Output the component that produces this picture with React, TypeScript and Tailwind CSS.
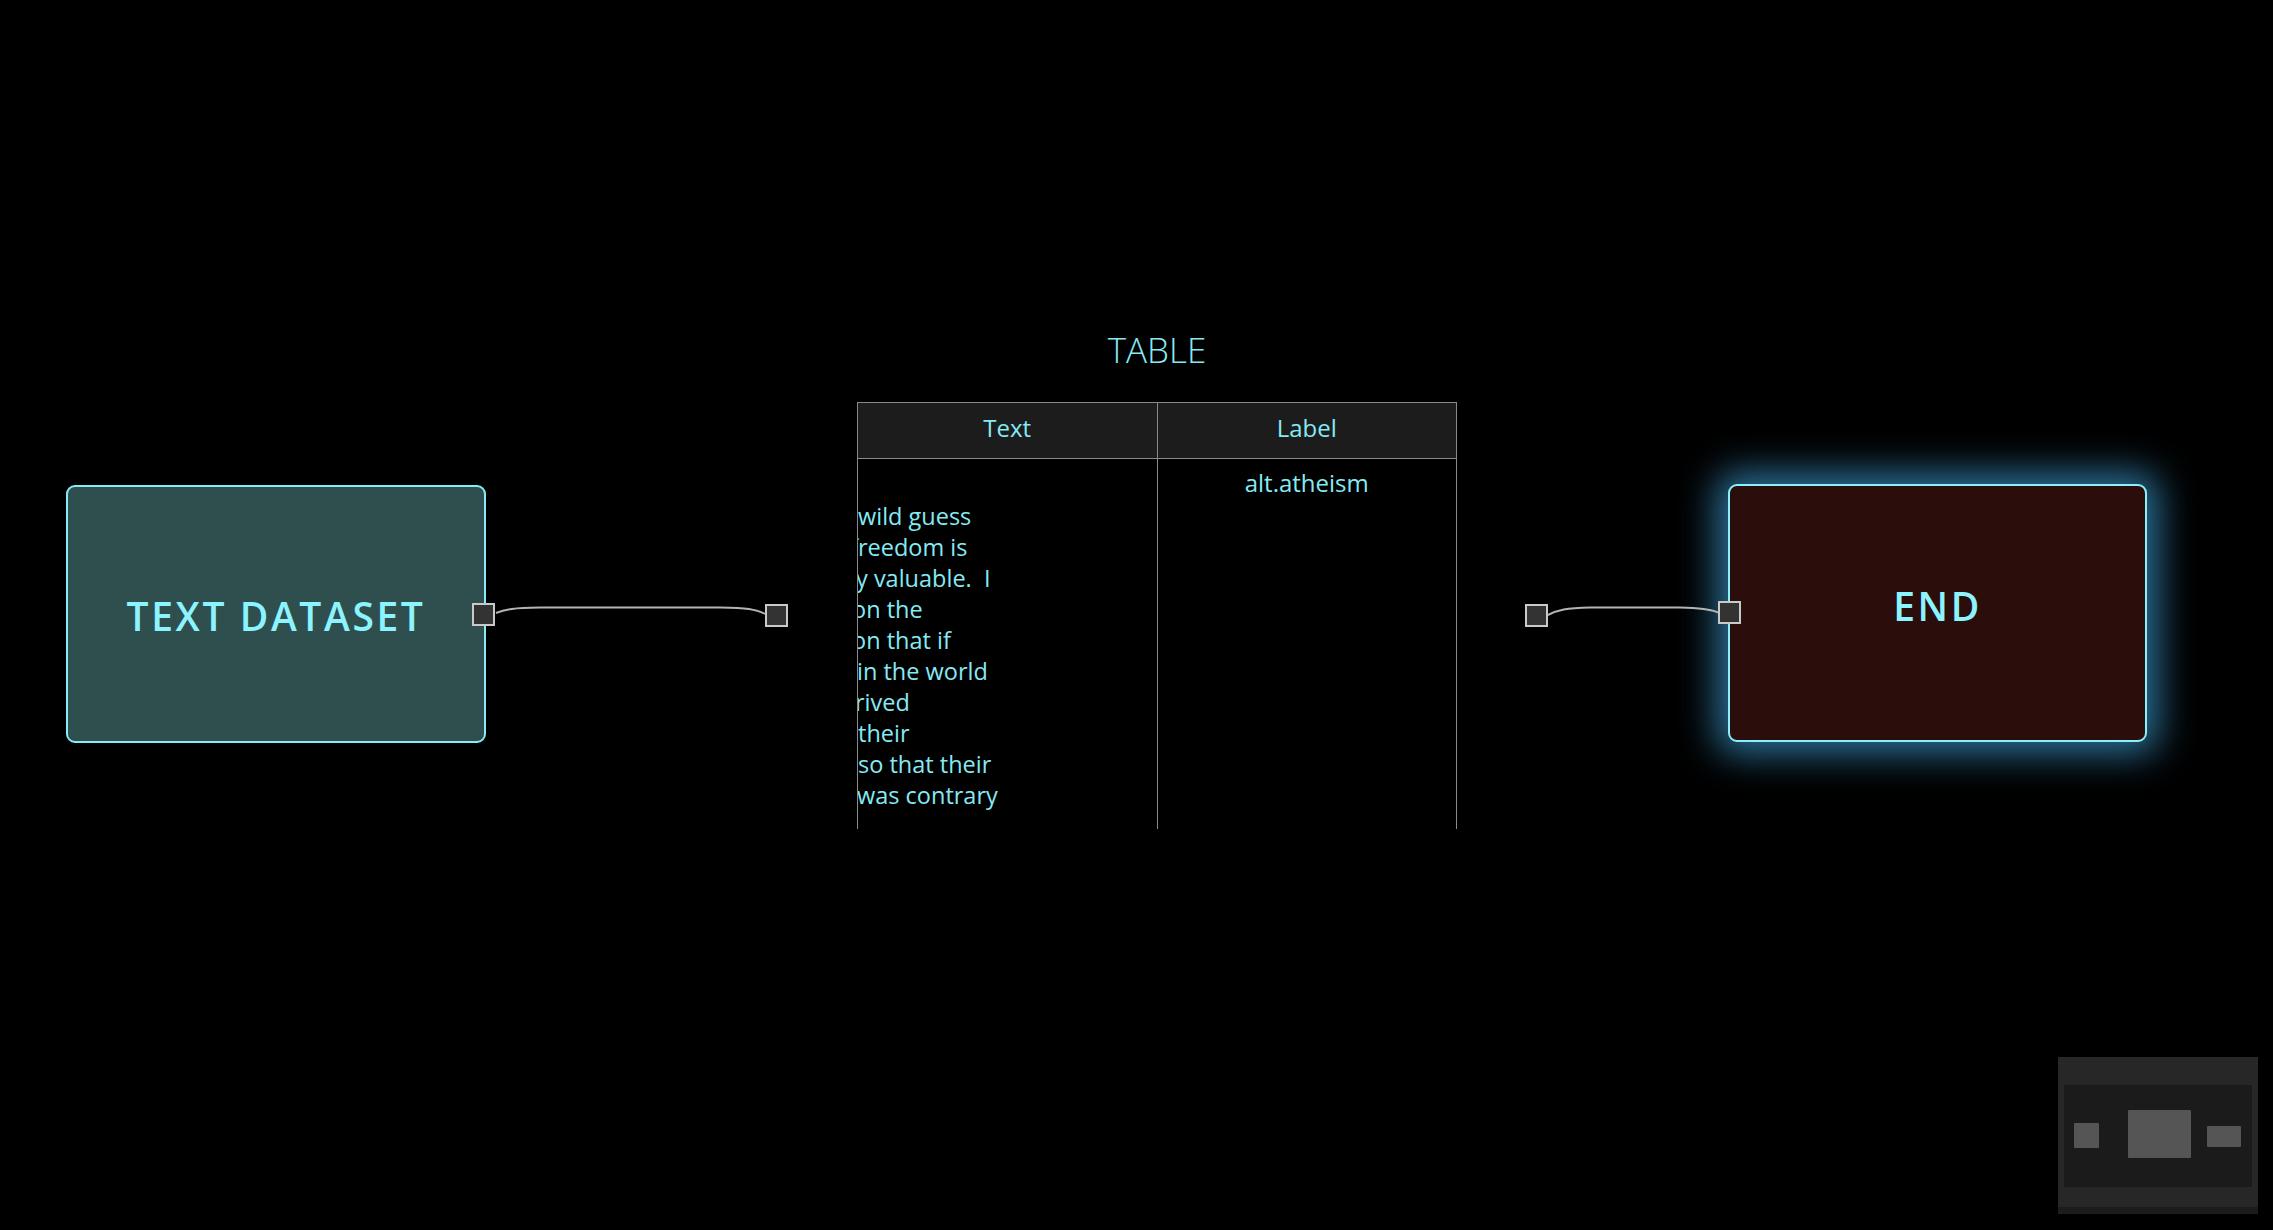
import React from "react";

// first lines of the sample, clipped by the cell's left edge as in the canvas
const bodyLines: { text: string; shift: string }[] = [
  { text: " ", shift: "ml-0" },
  { text: "wild guess", shift: "ml-0" },
  { text: "freedom is", shift: "-ml-[8px]" },
  { text: "y valuable.  I", shift: "-ml-[2px]" },
  { text: "on the", shift: "-ml-[6px]" },
  { text: "on that if", shift: "-ml-[6px]" },
  { text: "in the world", shift: "-ml-[1px]" },
  { text: "rived", shift: "-ml-[3px]" },
  { text: "their", shift: "ml-0" },
  { text: "so that their", shift: "ml-0" },
  { text: "was contrary", shift: "-ml-[1px]" },
];

function Handle({ className }: { className: string }) {
  return (
    <div
      className={`absolute w-[23px] h-[23px] bg-[#333333] border-2 border-[#c9c9c9] z-20 ${className}`}
    />
  );
}

function MiniMap() {
  return (
    <div className="absolute right-[15px] bottom-[16px] w-[200px] h-[157px] bg-[#272727] flex flex-col">
      <div className="flex-1 flex flex-col justify-center px-[6px] pt-[8px]">
        <div className="h-[102px] bg-[#1b1b1b] flex items-center pl-[10px]">
          <div className="w-[25px] h-[25px] bg-[#555555] rounded-[1px] mb-[2px]" />
          <div className="ml-[29px] w-[63px] h-[48px] bg-[#555555] rounded-[1px] mt-[-4px]" />
          <div className="ml-[16px] w-[34px] h-[21px] bg-[#555555] rounded-[1px]" />
        </div>
      </div>
      <div className="h-[7px] bg-[#1c1c1c]" />
    </div>
  );
}

export default function App() {
  return (
    <div
      className="relative w-screen h-screen bg-black overflow-hidden"
      style={{ fontFamily: '"Open Sans", "Noto Sans", sans-serif' }}
    >
      {/* edges */}
      <svg className="absolute inset-0 w-full h-full z-10" viewBox="0 0 2273 1230">
        <path
          d="M 496 613 C 506 609, 514 608, 540 607.6 L 720 607.6 C 746 608, 756 609, 765 614"
          fill="none"
          stroke="#b4b4b4"
          strokeWidth="2"
        />
        <path
          d="M 1548 615 C 1558 610, 1566 608, 1590 607.6 L 1680 607.6 C 1700 608, 1710 609, 1718 612.5"
          fill="none"
          stroke="#b4b4b4"
          strokeWidth="2"
        />
      </svg>

      {/* text dataset node */}
      <div className="absolute left-[66px] top-[485px] w-[420px] h-[258px] rounded-[9px] border-2 border-[#84ecf8] bg-[#2f4f4f] flex items-center justify-center pt-[4px]">
        <span className="text-[39px] font-[550] tracking-[2.6px] text-[#8cf4ff]">TEXT DATASET</span>
      </div>
      <Handle className="left-[472px] top-[603px]" />

      {/* table node */}
      <Handle className="left-[765px] top-[604px]" />
      <div className="absolute left-[857px] top-[324px] w-[600px] text-[#86eaf4]">
        <div className="h-[52px] flex items-center justify-center text-[35px] font-light">TABLE</div>
        <div className="mt-[26px] grid grid-cols-2 border-t border-l border-[#8a8a8a]">
          <div className="h-[56px] bg-[#1c1c1c] border-r border-b border-[#8a8a8a] flex items-center justify-center pb-[5px] text-[24px]">
            Text
          </div>
          <div className="h-[56px] bg-[#1c1c1c] border-r border-b border-[#8a8a8a] flex items-center justify-center pb-[5px] text-[24px]">
            Label
          </div>
          <div className="h-[370px] border-r border-[#8a8a8a] overflow-hidden pt-[11px] text-[23.5px] leading-[31px]">
            {bodyLines.map((l, i) => (
              <div key={i} className={`whitespace-pre h-[31px] ${l.shift}`}>
                {l.text}
              </div>
            ))}
          </div>
          <div className="h-[370px] border-r border-[#8a8a8a] pt-[8px] text-[24px] leading-[31px] text-center">
            alt.atheism
          </div>
        </div>
      </div>
      <Handle className="left-[1525px] top-[604px]" />

      {/* end node */}
      <div className="absolute left-[1728px] top-[484px] w-[419px] h-[258px] rounded-[9px] border-2 border-[#8af0fc] bg-[#2b0e0c] shadow-[0_0_36px_12px_rgba(58,150,200,0.75)] flex items-center justify-center pb-[14px]">
        <span className="text-[39px] font-[550] tracking-[2.6px] text-[#8cf4ff]">END</span>
      </div>
      <Handle className="left-[1718px] top-[601px]" />

      <MiniMap />
    </div>
  );
}
